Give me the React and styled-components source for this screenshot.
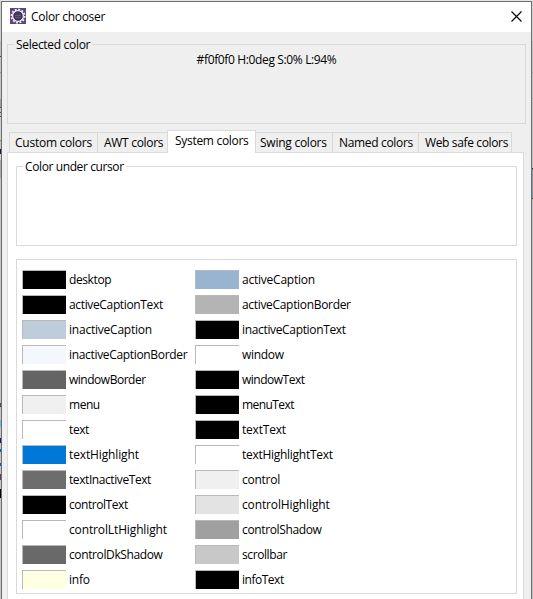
import React from "react";
import styled, { createGlobalStyle } from "styled-components";

const Global = createGlobalStyle`
  * { box-sizing: border-box; }
  body { margin: 0; overflow: hidden; background: #c4c4c4; }
`;

const Desktop = styled.div`
  display: grid;
  grid-template-columns: 1px 531px 1px;
  width: 533px;
  height: 599px;
  padding-top: 1px;
  background: #e6e6e6;
  font-family: "Open Sans", "Noto Sans", sans-serif;
  font-size: 12px;
  line-height: 16px;
  color: #000;
`;

const Edge = styled.div`
  background: linear-gradient(${(p) => p.$stops});
`;

const Window = styled.div`
  display: flex;
  flex-direction: column;
  height: 598px;
  border: 1px solid #6d6d6d;
  border-bottom: 0;
  background: #efefef;
  overflow: hidden;
`;

const TitleBar = styled.header`
  display: flex;
  align-items: center;
  flex: 0 0 30px;
  padding: 0 9px 0 8px;
  background: #fff;
`;

const Title = styled.div`
  flex: 1;
  margin-left: 5px;
  letter-spacing: -0.3px;
`;

const AppIcon = styled.svg`
  width: 16px;
  height: 16px;
  margin-bottom: 2px;
`;

const CloseIcon = styled.svg`
  width: 11px;
  height: 11px;
  margin-bottom: 1px;
`;

const Group = styled.section`
  flex: none;
  height: 80px;
  margin: ${(p) => p.$margin};
  border: 1px solid #dadada;
`;

const Legend = styled.div`
  width: max-content;
  height: 16px;
  margin: -8px 0 0 6px;
  padding: 0 2px;
  background: ${(p) => p.$bg};
  letter-spacing: ${(p) => p.$track}px;
`;

const ColorInfo = styled.div`
  margin-top: -1px;
  text-align: center;
  letter-spacing: -0.36px;
`;

const Tabs = styled.nav`
  display: flex;
  align-items: flex-end;
  flex: 0 0 22px;
  margin: 6px 0 0 7px;
`;

const Tab = styled.div`
  width: ${(p) => p.$width}px;
  height: ${(p) => (p.$active ? 23 : 20)}px;
  margin-bottom: ${(p) => (p.$active ? -1 : 0)}px;
  padding: 2px 0 0 ${(p) => p.$pad}px;
  border: solid #d9d9d9;
  border-width: 1px ${(p) => (p.$openEnd ? 0 : 1)}px 0 ${(p) => (p.$joined ? 0 : 1)}px;
  background: ${(p) => (p.$active ? "#fff" : "#efefef")};
  white-space: nowrap;
  letter-spacing: ${(p) => p.$track}px;
  z-index: ${(p) => (p.$active ? 1 : 0)};
`;

const Panel = styled.main`
  flex: 1;
  margin: 0 7px 0 5px;
  border: 1px solid #dadada;
  border-bottom: 0;
  background: #fff;
`;

const ColorList = styled.div`
  display: grid;
  grid-template-columns: 173px 1fr;
  grid-auto-rows: 25px;
  height: 335px;
  margin: 13px 6px 0 8px;
  padding: 7px 0 0 5px;
  border: 1px solid #dadada;
`;

const ColorItem = styled.div`
  display: flex;
  align-items: center;
  gap: 3px;
  white-space: nowrap;
`;

const Swatch = styled.div`
  width: 44px;
  height: 19px;
  border: solid #b9b9b9;
  border-width: 1px 0 0 1px;
  background: ${(p) => p.$color};
`;

const Label = styled.span`
  padding-top: 1px;
  letter-spacing: ${(p) => p.$track}px;
`;

const colors = [
  ["desktop", "#000", -0.4], ["activeCaption", "#99b4d1", -0.23],
  ["activeCaptionText", "#000", -0.35], ["activeCaptionBorder", "#b4b4b4", -0.32],
  ["inactiveCaption", "#bfcddb", -0.22], ["inactiveCaptionText", "#000", -0.34],
  ["inactiveCaptionBorder", "#f4f7fc", -0.33], ["window", "#fff", -0.3],
  ["windowBorder", "#646464", -0.48], ["windowText", "#000", -0.5],
  ["menu", "#f0f0f0", -0.45], ["menuText", "#000", -0.58],
  ["text", "#fff", -0.4], ["textText", "#000", -0.2],
  ["textHighlight", "#0078d7", -0.13], ["textHighlightText", "#fff", -0.28],
  ["textInactiveText", "#6d6d6d", -0.42], ["control", "#f0f0f0", -0.25],
  ["controlText", "#000", -0.45], ["controlHighlight", "#e3e3e3", -0.13],
  ["controlLtHighlight", "#fff", -0.13], ["controlShadow", "#a0a0a0", -0.36],
  ["controlDkShadow", "#696969", -0.38], ["scrollbar", "#c8c8c8", -0.4],
  ["info", "#ffffe1", -0.25], ["infoText", "#000", -0.48],
];

const tabs = [
  { name: "Custom colors", width: 89, pad: 5, track: -0.25 },
  { name: "AWT colors", width: 69, pad: 6, track: -0.3, joined: true, openEnd: true },
  { name: "System colors", width: 89, pad: 7, track: -0.3, active: true },
  { name: "Swing colors", width: 77, pad: 4, track: -0.25, joined: true },
  { name: "Named colors", width: 86, pad: 6, track: -0.33, joined: true },
  { name: "Web safe colors", width: 93, pad: 6, track: -0.36, joined: true },
];

const leftEdge = [
  "#d0d0d0 0 40px", "#bdbdbd 40px 55px", "#444 55px 56px", "#c4c4c4 56px 71px",
  "#999 71px 72px", "#c4c4c4 72px 98px", "#a2a2a2 98px 106px", "#555 106px 107px",
  "#c4c4c4 107px 111px", "#555 111px 112px", "#c4c4c4 112px 115px", "#555 115px 116px",
  "#d0d0d0 116px 139px", "#888 139px 140px", "#c4c4c4 140px 148px", "#24134d 148px 153px",
  "#d0d0d0 153px 159px", "#aaa 159px 177px", "#c4c4c4 177px 402px", "#6a4652 402px 406px",
  "#c4c4c4 406px 419px", "#72bde0 419px 426px", "#c4c4c4 426px 437px", "#19196f 437px 442px",
  "#c4c4c4 442px 448px", "#0067b8 448px 451px", "#c4c4c4 451px 462px", "#0067b8 462px 465px",
  "#c4c4c4 465px 473px", "#5b4656 473px 479px", "#c4c4c4 479px 488px", "#000 488px 497px",
  "#c4c4c4 497px 598px",
].join(", ");

const rightEdge = [
  "#d4d4d4 0 40px", "#c4c4c4 40px 71px", "#a5a5a5 71px 72px", "#c4c4c4 72px 97px",
  "#a5a5a5 97px 98px", "#c4c4c4 98px 167px", "#333 167px 168px", "#8b979f 168px 197px",
  "#333 197px 198px", "#c4c4c4 198px 598px",
].join(", ");

function GearIcon() {
  return (
    <AppIcon viewBox="0 0 16 16">
      <rect width="16" height="16" fill="#5c4680" />
      <circle cx="8" cy="8" r="6.6" fill="none" stroke="#f0eef2" strokeWidth="1.8" strokeDasharray="1.9 1.556" />
      <circle cx="8" cy="8" r="5.3" fill="#463c5e" stroke="#eceaee" strokeWidth="1.6" />
      <circle cx="8" cy="8" r="4.1" fill="none" stroke="#292339" strokeWidth="0.8" />
      <path d="M5 7.5h6M5 9.5h6" stroke="#63557e" />
    </AppIcon>
  );
}

export default function App() {
  return (
    <>
      <Global />
      <Desktop>
        <Edge $stops={leftEdge} />
        <Window>
          <TitleBar>
            <GearIcon />
            <Title>Color chooser</Title>
            <CloseIcon viewBox="0 0 11 11">
              <path d="M.5.5l10 10M10.5.5l-10 10" stroke="#000" strokeWidth="1.1" />
            </CloseIcon>
          </TitleBar>
          <Group $margin="12px 5px 0 5px">
            <Legend $bg="#efefef" $track={-0.3}>Selected color</Legend>
            <ColorInfo>#f0f0f0 H:0deg S:0% L:94%</ColorInfo>
          </Group>
          <Tabs>
            {tabs.map((t) => (
              <Tab
                key={t.name}
                $width={t.width}
                $pad={t.pad}
                $track={t.track}
                $active={t.active}
                $joined={t.joined}
                $openEnd={t.openEnd}
              >
                {t.name}
              </Tab>
            ))}
          </Tabs>
          <Panel>
            <Group $margin="13px 6px 0 8px">
              <Legend $bg="#fff" $track={-0.39}>Color under cursor</Legend>
            </Group>
            <ColorList>
              {colors.map(([name, color, track]) => (
                <ColorItem key={name}>
                  <Swatch $color={color} />
                  <Label $track={track}>{name}</Label>
                </ColorItem>
              ))}
            </ColorList>
          </Panel>
        </Window>
        <Edge $stops={rightEdge} />
      </Desktop>
    </>
  );
}
